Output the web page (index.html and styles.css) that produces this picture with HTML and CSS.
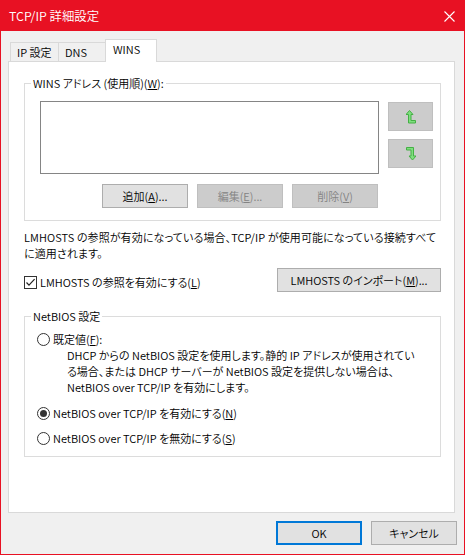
FILE: index.html
```html
<!DOCTYPE html>
<html lang="ja">
<head>
<meta charset="utf-8">
<title>TCP/IP 詳細設定</title>
<link rel="stylesheet" href="styles.css">
</head>
<body>
<div class="window">
  <div class="titlebar">
    <span class="title">TCP/IP 詳細設定</span>
    <svg class="close" width="11" height="11" viewBox="0 0 11 11"><path d="M0.5 0.5 L10.5 10.5 M10.5 0.5 L0.5 10.5" stroke="#fff" stroke-width="1.1" fill="none"/></svg>
  </div>
  <div class="body">
    <div class="tabs">
      <div class="tab tab-ip">IP 設定</div>
      <div class="tab tab-dns">DNS</div>
      <div class="tab tab-wins active">WINS</div>
    </div>
    <div class="panel">
      <div class="group wins">
        <div class="group-title">WINS アドレス (使用順)(<u>W</u>):</div>
        <div class="wins-row">
          <div class="listbox"></div>
          <div class="arrows">
            <button class="btn arrow" disabled>
              <svg width="10" height="14" viewBox="0 0 10 14"><path d="M3.5 0.5 L7 4.5 L5 4.5 L5 10.5 L9.5 10.5 L9.5 13 L2.5 13 L2.5 4.5 L0 4.5 Z" fill="#7ede7e" stroke="#44b044" stroke-width="1" stroke-linejoin="miter"/></svg>
            </button>
            <button class="btn arrow" disabled>
              <svg width="10" height="14" viewBox="0 0 10 14"><path d="M0.5 0.5 L7.5 0.5 L7.5 9 L10 9 L6.5 13 L3 9 L5 9 L5 3 L0.5 3 Z" fill="#7ede7e" stroke="#44b044" stroke-width="1" stroke-linejoin="miter"/></svg>
            </button>
          </div>
        </div>
        <div class="btn-row">
          <button class="btn">追加(<u>A</u>)...</button>
          <button class="btn" disabled>編集(<u>E</u>)...</button>
          <button class="btn" disabled>削除(<u>V</u>)</button>
        </div>
      </div>
      <p class="note">LMHOSTS の参照が有効になっている場合、TCP/IP が使用可能になっている接続すべて<br>に適用されます。</p>
      <div class="lm-row">
        <label class="check">
          <span class="checkbox"><svg width="11" height="11" viewBox="0 0 11 11"><path d="M1.5 5.5 L4 8.2 L9.6 2.2" stroke="#222" stroke-width="1.2" fill="none"/></svg></span>
          <span>LMHOSTS の参照を有効にする(<u>L</u>)</span>
        </label>
        <button class="btn import">LMHOSTS のインポート(<u>M</u>)...</button>
      </div>
      <div class="group netbios">
        <div class="group-title">NetBIOS 設定</div>
        <div class="radio-row first"><span class="radio"></span><span>既定値(<u>F</u>):</span></div>
        <p class="desc">DHCP からの NetBIOS 設定を使用します。静的 IP アドレスが使用されてい<br>る場合、または DHCP サーバーが NetBIOS 設定を提供しない場合は、<br>NetBIOS over TCP/IP を有効にします。</p>
        <div class="radio-row second"><span class="radio on"></span><span>NetBIOS over TCP/IP を有効にする(<u>N</u>)</span></div>
        <div class="radio-row third"><span class="radio"></span><span>NetBIOS over TCP/IP を無効にする(<u>S</u>)</span></div>
      </div>
    </div>
    <div class="footer">
      <button class="btn ok">OK</button>
      <button class="btn">キャンセル</button>
    </div>
  </div>
</div>
</body>
</html>
```

FILE: styles.css
```css
* { box-sizing: border-box; }
html, body { margin: 0; padding: 0; }
body {
  font-family: "Noto Sans CJK JP", "Noto Sans", sans-serif;
  font-size: 11px;
  font-weight: 350;
  line-height: 16px;
  color: #000;
  font-feature-settings: "palt";
}
.window {
  width: 465px;
  height: 555px;
  border: 1px solid #e81123;
  background: #f0f0f0;
  display: flex;
  flex-direction: column;
}
.titlebar {
  height: 30px;
  background: #e81123;
  color: #fff;
  display: flex;
  align-items: center;
  justify-content: space-between;
  padding: 0 9px 0 8px;
}
.title { line-height: 16px; font-size: 12.4px; }
.close { display: block; }
.body {
  padding: 0 7px;
}
.tabs {
  margin-top: 8px;
  height: 22px;
  padding-left: 2px;
  display: flex;
  align-items: flex-end;
}
.tab {
  height: 19px;
  border: 1px solid #d9d9d9;
  border-bottom: none;
  line-height: 18px;
  padding-left: 6px;
  white-space: nowrap;
}
.tab-ip { width: 49px; padding-left: 6px; }
.tab-dns { width: 48px; margin-left: -1px; }
.tab-wins { width: 52px; margin-left: -1px; padding-left: 7px; }
.tab.active {
  height: 23px;
  margin-bottom: -1px;
  background: #fff;
  position: relative;
  z-index: 1;
  padding-top: 1px;
  line-height: 16px;
}
.panel {
  width: 447px;
  height: 452px;
  border: 1px solid #d9d9d9;
  background: #fff;
  padding: 21px 0 0 15px;
}
.group {
  width: 417px;
  border: 1px solid #dcdcdc;
}
.group-title {
  margin: -9px 0 0 6px;
  padding: 0 2px;
  background: #fff;
  width: fit-content;
  height: 16px;
  white-space: nowrap;
}
.wins { padding-bottom: 12px; }
.wins-row {
  margin: 10px 0 0 15px;
  display: flex;
  gap: 9px;
  align-items: flex-start;
}
.listbox {
  width: 339px;
  height: 73px;
  border: 1px solid #858585;
  background: #fff;
}
.arrows {
  margin-top: 1px;
  display: flex;
  flex-direction: column;
  gap: 8px;
}
.btn {
  font: inherit;
  font-feature-settings: "palt";
  color: #000;
  background: #e1e1e1;
  border: 1px solid #adadad;
  height: 24px;
  width: 86px;
  padding: 0;
  margin: 0;
  display: flex;
  align-items: center;
  justify-content: center;
  white-space: nowrap;
}
.btn:disabled {
  background: #cccccc;
  border-color: #bfbfbf;
  color: #838383;
}
.btn.arrow {
  width: 45px;
  height: 29px;
}
.btn.arrow svg { display: block; }
.btn-row {
  margin: 10px 0 0 77px;
  display: flex;
  gap: 9px;
}
.note {
  margin: 8px 0 0 0;
  white-space: nowrap;
  letter-spacing: 0.1px;
}
.lm-row {
  margin-top: 7px;
  width: 417px;
  display: flex;
  justify-content: space-between;
  align-items: flex-start;
}
.check {
  margin-top: 6px;
  display: flex;
  align-items: center;
  gap: 3px;
  height: 16px;
  white-space: nowrap;
}
.checkbox {
  width: 13px;
  height: 13px;
  border: 1px solid #333;
  background: #fff;
  display: flex;
  align-items: center;
  justify-content: center;
}
.checkbox svg { display: block; }
.btn.import { width: 164px; }
.netbios {
  margin-top: 24px;
  padding-bottom: 10px;
}
.radio-row {
  margin-left: 12px;
  display: flex;
  align-items: center;
  gap: 3px;
  height: 16px;
  white-space: nowrap;
}
.radio-row.first { margin-top: 7px; }
.radio-row.second { margin-top: 10px; }
.radio-row.third { margin-top: 9px; }
.radio {
  width: 13px;
  height: 13px;
  border: 1px solid #333;
  border-radius: 50%;
  background: #fff;
  display: flex;
  align-items: center;
  justify-content: center;
}
.radio.on::after {
  content: "";
  width: 7px;
  height: 7px;
  border-radius: 50%;
  background: #333;
}
.desc {
  margin: 0;
  padding-left: 42px;
  white-space: nowrap;
}
.footer {
  margin-top: 8px;
  display: flex;
  justify-content: flex-end;
  gap: 9px;
}
.btn.ok {
  border: 2px solid #0078d7;
}
```
